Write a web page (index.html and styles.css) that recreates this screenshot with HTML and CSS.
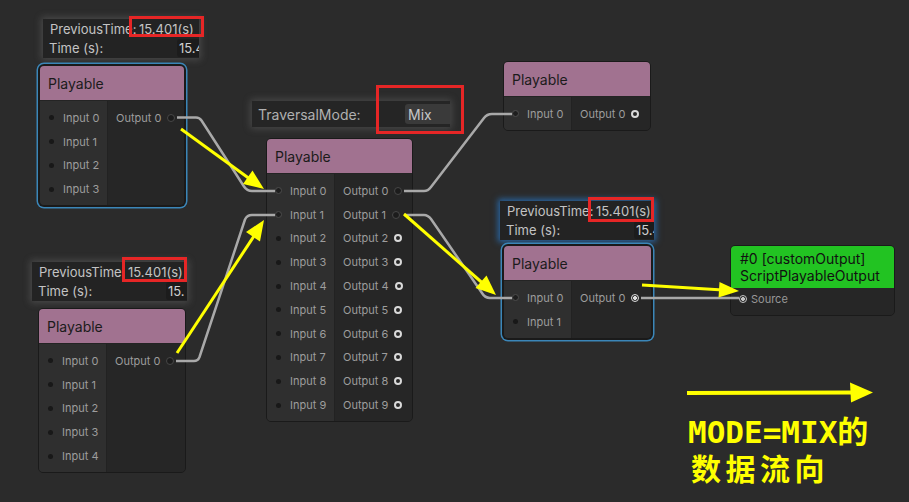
FILE: index.html
```html
<!DOCTYPE html>
<html lang="zh">
<head>
<meta charset="utf-8">
<title>PlayableGraph Visualizer</title>
<link rel="stylesheet" href="styles.css">
</head>
<body>
<div class="canvas">

  <!-- info panels -->
  <div class="info info-a">
    <div class="irow"><span class="ilabel">PreviousTime:</span><span class="ival">15.401(s)</span></div>
    <div class="irow"><span class="tlabel">Time (s):</span><span class="field">15.4</span></div>
  </div>
  <div class="info info-b">
    <div class="irow"><span class="ilabel">PreviousTime:</span><span class="ival">15.401(s)</span></div>
    <div class="irow"><span class="tlabel">Time (s):</span><span class="field">15.</span></div>
  </div>
  <div class="info info-c">
    <div class="irow"><span class="ilabel">PreviousTime:</span><span class="ival">15.401(s)</span></div>
    <div class="irow"><span class="tlabel">Time (s):</span><span class="field">15.4</span></div>
  </div>
  <div class="mode">
    <span class="mlabel">TraversalMode:</span>
    <span class="mfield">Mix</span>
  </div>

  <!-- node 1 (selected) -->
  <div class="node n1 sel">
    <div class="hdr">Playable</div>
    <div class="body">
      <div class="col in">
        <div class="row"><span class="slot"><i class="dot"></i></span>Input 0</div>
        <div class="row"><span class="slot"><i class="dot"></i></span>Input 1</div>
        <div class="row"><span class="slot"><i class="dot"></i></span>Input 2</div>
        <div class="row"><span class="slot"><i class="dot"></i></span>Input 3</div>
      </div>
      <div class="col out">
        <div class="row">Output 0<i class="ring con"></i></div>
      </div>
    </div>
  </div>

  <!-- node 2 -->
  <div class="node n2">
    <div class="hdr">Playable</div>
    <div class="body">
      <div class="col in">
        <div class="row"><span class="slot"><i class="dot"></i></span>Input 0</div>
        <div class="row"><span class="slot"><i class="dot"></i></span>Input 1</div>
        <div class="row"><span class="slot"><i class="dot"></i></span>Input 2</div>
        <div class="row"><span class="slot"><i class="dot"></i></span>Input 3</div>
        <div class="row"><span class="slot"><i class="dot"></i></span>Input 4</div>
      </div>
      <div class="col out">
        <div class="row">Output 0<i class="ring con"></i></div>
      </div>
    </div>
  </div>

  <!-- mixer node -->
  <div class="node mid">
    <div class="hdr">Playable</div>
    <div class="body">
      <div class="col in">
        <div class="row"><span class="slot"><i class="cdot"></i></span>Input 0</div>
        <div class="row"><span class="slot"><i class="cdot"></i></span>Input 1</div>
        <div class="row"><span class="slot"><i class="dot"></i></span>Input 2</div>
        <div class="row"><span class="slot"><i class="dot"></i></span>Input 3</div>
        <div class="row"><span class="slot"><i class="dot"></i></span>Input 4</div>
        <div class="row"><span class="slot"><i class="dot"></i></span>Input 5</div>
        <div class="row"><span class="slot"><i class="dot"></i></span>Input 6</div>
        <div class="row"><span class="slot"><i class="dot"></i></span>Input 7</div>
        <div class="row"><span class="slot"><i class="dot"></i></span>Input 8</div>
        <div class="row"><span class="slot"><i class="dot"></i></span>Input 9</div>
      </div>
      <div class="col out">
        <div class="row">Output 0<i class="ring con"></i></div>
        <div class="row">Output 1<i class="ring con"></i></div>
        <div class="row">Output 2<i class="ring"></i></div>
        <div class="row">Output 3<i class="ring"></i></div>
        <div class="row">Output 4<i class="ring"></i></div>
        <div class="row">Output 5<i class="ring"></i></div>
        <div class="row">Output 6<i class="ring"></i></div>
        <div class="row">Output 7<i class="ring"></i></div>
        <div class="row">Output 8<i class="ring"></i></div>
        <div class="row">Output 9<i class="ring"></i></div>
      </div>
    </div>
  </div>

  <!-- top right node -->
  <div class="node tr">
    <div class="hdr">Playable</div>
    <div class="body">
      <div class="col in">
        <div class="row"><span class="slot"><i class="cdot"></i></span>Input 0</div>
      </div>
      <div class="col out">
        <div class="row">Output 0<i class="ring"></i></div>
      </div>
    </div>
  </div>

  <!-- right middle node (selected) -->
  <div class="node rm sel">
    <div class="hdr">Playable</div>
    <div class="body">
      <div class="col in">
        <div class="row"><span class="slot"><i class="cdot"></i></span>Input 0</div>
        <div class="row"><span class="slot"><i class="dot"></i></span>Input 1</div>
      </div>
      <div class="col out">
        <div class="row">Output 0<i class="ring act"></i></div>
      </div>
    </div>
  </div>

  <!-- output node -->
  <div class="node outnode">
    <div class="ghdr">#0 [customOutput]<br>ScriptPlayableOutput</div>
    <div class="obody"><i class="ring src"></i>Source</div>
  </div>

  <!-- edges -->
  <svg class="edges" width="909" height="502" viewBox="0 0 909 502">
    <g fill="none" stroke="#a9a9a9" stroke-width="2.5" stroke-linejoin="round">
      <path d="M177 117.5 H196 Q199.5 117.5 201.5 120.5 L244 186.5 Q247 191 252 191 H275"/>
      <path d="M176 361 H194 Q198 361 199.5 357 L245 219.5 Q247 215 252 215 H275"/>
      <path d="M404 191 H424 Q428 191 431 187 L484 118 Q487 114 492 114 H512"/>
      <path d="M404 215 H424 Q428 215 431 219 L482 293 Q485 298 490 298 H512"/>
      <path d="M641 298 H739"/>
    </g>
  </svg>

  <!-- red highlight boxes -->
  <div class="rbox rb1"></div>
  <div class="rbox rb2"></div>
  <div class="rbox rb3"></div>
  <div class="rbox rb4"></div>

  <!-- yellow annotation arrows -->
  <svg class="arrows" width="909" height="502" viewBox="0 0 909 502">
    <g stroke="#ffff00" stroke-width="3" fill="none">
      <line x1="181" y1="129" x2="254" y2="182"/>
      <line x1="177" y1="353" x2="258" y2="230"/>
      <line x1="404" y1="214" x2="487" y2="287"/>
      <line x1="642" y1="285" x2="727" y2="290.3"/>
      <line x1="687" y1="393" x2="853" y2="392.5" stroke-width="4"/>
    </g>
    <g fill="#ffff00">
      <polygon points="264,189 243,184 252.5,170.5"/>
      <polygon points="264,220 260,241.5 246,232"/>
      <polygon points="496,295 475.5,288 486.5,275.5"/>
      <polygon points="739,291 718.5,297.5 719.5,282"/>
      <polygon points="873,392.5 850,382.5 851,402.5"/>
    </g>
  </svg>

  <div class="note">
    <div class="l1">MODE=MIX的</div>
    <div class="l2">数据流向</div>
  </div>
</div>
</body>
</html>
```

FILE: styles.css
```css
* { box-sizing: border-box; }

html, body {
  margin: 0;
  padding: 0;
  background: #2b2b2b;
}

.canvas {
  position: relative;
  width: 909px;
  height: 502px;
  overflow: hidden;
  background: #2b2b2b;
  font-family: Inter, "Noto Sans", sans-serif;
}

/* ---------- nodes ---------- */
.node {
  position: absolute;
  border: 1px solid #1a1a1a;
  border-radius: 5px;
  background: #262626;
  overflow: hidden;
  z-index: 2;
}

.node.sel {
  box-shadow: 0 0 0 1px #1a1a1a, 0 0 0 2.5px #3b86b8;
}

.n1  { left: 39px;  top: 65px;  width: 146px; }
.n2  { left: 38px;  top: 308px; width: 148px; }
.mid { left: 266px; top: 138px; width: 147px; }
.tr  { left: 503px; top: 61px;  width: 148px; }
.rm  { left: 503px; top: 245px; width: 149px; }
.outnode { left: 730px; top: 245px; width: 165px; }

.hdr {
  height: 35px;
  background: #a17290;
  color: #1b1b1b;
  font-size: 14px;
  padding-left: 8px;
  display: flex;
  align-items: center;
  border-bottom: 1px solid #242424;
}

.body {
  display: flex;
}

.col {
  padding: 5px 0 4px;
}

.col.in {
  width: 68px;
  background: #2f2f2f;
  border-right: 1px solid #222;
}

.col.out {
  flex: 1;
  background: #262626;
}

.row {
  height: 23.8px;
  display: flex;
  align-items: center;
  font-size: 11px;
  color: #9d9d9d;
  white-space: nowrap;
}

.in .row {
  padding-left: 8px;
  gap: 8px;
}

.out .row {
  padding-left: 8px;
  gap: 6px;
}

.slot {
  width: 7px;
  height: 7px;
  display: flex;
  align-items: center;
  justify-content: center;
}

.dot {
  display: block;
  width: 5px;
  height: 5px;
  border-radius: 50%;
  background: #181818;
}

.cdot {
  display: block;
  width: 7px;
  height: 7px;
  border-radius: 50%;
  border: 1.5px solid #4c4c4c;
  background: #1e1e1e;
}

.ring {
  display: block;
  flex: none;
  width: 8px;
  height: 8px;
  border-radius: 50%;
  border: 2px solid #d9d9d9;
  background: transparent;
}

.ring.con {
  width: 8px;
  height: 8px;
  border: 1.5px solid #474747;
  background: #1c1c1c;
}

.ring.act {
  border: 1.5px solid #dedede;
  background: radial-gradient(circle, #dedede 0 1.7px, transparent 2.2px);
}

.ring.src {
  border: 1.5px solid #c4c4c4;
  background: radial-gradient(circle, #c4c4c4 0 1.7px, transparent 2.2px);
}

/* output node */
.ghdr {
  background: #22c322;
  color: #111;
  font-size: 14px;
  line-height: 17px;
  padding: 4px 9px 4px;
  white-space: nowrap;
}

.obody {
  height: 27px;
  display: flex;
  align-items: center;
  gap: 4px;
  padding-left: 8px;
  padding-bottom: 5px;
  font-size: 11px;
  color: #979797;
  background: #262626;
}

/* ---------- info panels ---------- */
.info {
  position: absolute;
  background: #232323;
  color: #c3c3c3;
  font-size: 13px;
  overflow: hidden;
  box-shadow: 0 0 7px 2px rgba(150, 150, 150, 0.28);
  z-index: 1;
}

.info-a { left: 43px;  top: 19px;  width: 156px; height: 39px; }
.info-b { left: 32px;  top: 262px; width: 155px; height: 39px; }
.info-c { left: 500px; top: 201px; width: 154px; height: 39px;
  box-shadow: 0 0 6px 2px rgba(40, 120, 200, 0.75); }

.irow {
  height: 19.5px;
  display: flex;
  align-items: center;
  white-space: nowrap;
}

.ilabel {
  width: 96px;
  flex: none;
  padding-left: 7px;
}

.tlabel {
  width: 134px;
  flex: none;
  padding-left: 6px;
}

.field {
  flex: none;
  width: 26px;
  height: 18px;
  display: flex;
  align-items: center;
  padding-left: 2px;
  background: #1c1c1c;
  border-radius: 3px 0 0 3px;
  color: #cfcfcf;
}

.mode {
  position: absolute;
  left: 252px;
  top: 101px;
  width: 198px;
  height: 26px;
  display: flex;
  align-items: center;
  background: #252525;
  box-shadow: 0 0 7px 2px rgba(150, 150, 150, 0.25);
  overflow: hidden;
  font-size: 14px;
  z-index: 1;
}

.mlabel {
  width: 153px;
  flex: none;
  padding-left: 6px;
  color: #b0b0b0;
}

.mfield {
  flex: none;
  width: 45px;
  height: 20px;
  display: flex;
  align-items: center;
  padding-left: 3px;
  background: #3a3a3a;
  border-radius: 3px 0 0 3px;
  color: #c6c6c6;
}

/* ---------- overlays ---------- */
.edges {
  position: absolute;
  left: 0;
  top: 0;
  z-index: 3;
  pointer-events: none;
}

.rbox {
  position: absolute;
  border: 3px solid #e62626;
  z-index: 4;
}

.rb1 { left: 129px; top: 16px;  width: 75px; height: 21px; }
.rb2 { left: 122px; top: 257px; width: 65px; height: 25px; }
.rb3 { left: 588px; top: 197px; width: 66px; height: 25px; }
.rb4 { left: 376px; top: 85px;  width: 88px; height: 49px; }

.arrows {
  position: absolute;
  left: 0;
  top: 0;
  z-index: 5;
  pointer-events: none;
}

.note {
  position: absolute;
  left: 688px;
  top: 414px;
  color: #ffff00;
  font-family: "DejaVu Sans Mono", "Noto Sans CJK SC", monospace;
  font-weight: bold;
  font-size: 31px;
  z-index: 5;
  white-space: nowrap;
}

.note .l1 {
  height: 36px;
  line-height: 36px;
}

.note .l2 {
  height: 34px;
  line-height: 34px;
  font-family: "Noto Sans CJK SC", sans-serif;
  font-size: 30px;
  letter-spacing: 4.5px;
  padding-left: 3px;
}
```
